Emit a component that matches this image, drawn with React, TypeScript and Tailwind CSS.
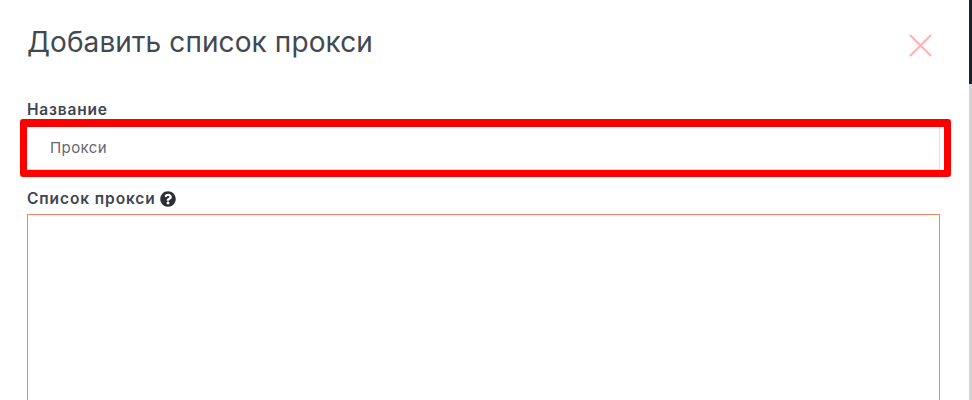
import { FaQuestionCircle } from "react-icons/fa";

export default function App() {
  return (
    <main className="flex h-[400px] w-[972px] overflow-hidden bg-white font-['Inter',sans-serif] text-[#3f4550]">
      {/* modal */}
      <div className="w-[969px] shrink-0 pl-[27px] pr-[29px]">
        <div className="flex items-start justify-between pt-[24px]">
          <h1 className="text-[28px] leading-[36px] font-normal tracking-[0.1px] text-[#424850]">Добавить список прокси</h1>
          <button className="mt-[10px] mr-[8px] text-[#ffb0b0]">
            <svg width="24" height="24" viewBox="0 0 24 24" fill="none" stroke="currentColor" strokeWidth="2">
              <path d="M2 1 L23 22 M23 1 L2 22" />
            </svg>
          </button>
        </div>

        <label className="mt-[41px] block text-[15.5px] leading-[18px] font-semibold tracking-[0.8px] text-[#3f4550]">Название</label>
        {/* highlight frame round the name field */}
        <div className="-ml-[7px] mr-[-11px] h-[58px] rounded-[3px] border-x-[7px] border-t-[8px] border-b-[7px] border-[#ff0000]">
          <div className="mr-[4px] flex h-full items-center border-r border-b border-[#dddddd] pl-[23px] text-[15px] tracking-[0.4px] text-[#666670]">Прокси</div>
        </div>

        <label className="mt-[12px] flex items-center gap-[4px] text-[15.5px] leading-[20px] font-semibold tracking-[0.9px] text-[#3f4550]">
          Список прокси
          <FaQuestionCircle className="text-[16px] text-[#2b2f36]" />
        </label>
        <div className="mt-[5px] h-[300px] w-[913px] border border-[#f2845f]" />
      </div>

      {/* page scrollbar behind the modal */}
      <div className="flex w-[3px] flex-col bg-[#d4d4d4]">
        <div className="h-[84px] bg-[#1b2333]" />
      </div>
    </main>
  );
}
